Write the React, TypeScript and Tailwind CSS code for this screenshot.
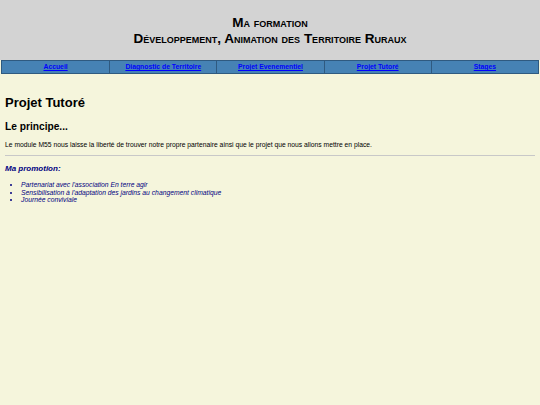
import React from "react";

const links = ["Accueil", "Diagnostic de Territoire", "Projet Evenementiel", "Projet Tutoré", "Stages"];

export default function App() {
  return (
    <div className="min-h-[405px] bg-[#f5f5dc] text-black" style={{ fontFamily: '"Liberation Sans", Arial, sans-serif' }}>
      <div className="bg-[#d3d3d3] pt-[15px] pb-[13px] text-center">
        <div className="text-[13.5px] leading-[16px] font-bold [font-variant:small-caps]">Ma formation</div>
        <div className="text-[13.5px] leading-[16px] font-bold [font-variant:small-caps]">Développement, Animation des Territoire Ruraux</div>
      </div>
      <div className="px-[1px]">
        <div className="grid grid-cols-5 border border-[#2f5a80] bg-[#4682b4]">
          {links.map((l, i) => (
            <div key={l} className={"h-[12px] flex items-center justify-center " + (i > 0 ? "border-l border-[#2f5a80]" : "")}>
              <a href="#" className="text-[6.8px] leading-[8px] font-bold text-[#0000ff] underline">{l}</a>
            </div>
          ))}
        </div>
      </div>
      <div className="px-[5px]">
        <h1 className="mt-[21px] text-[13px] leading-[16px] font-bold">Projet Tutoré</h1>
        <h2 className="mt-[9px] text-[10.2px] leading-[13px] font-bold">Le principe...</h2>
        <p className="mt-[7px] text-[6.75px] leading-[9px]">Le module M55 nous laisse la liberté de trouver notre propre partenaire ainsi que le projet que nous allons mettre en place.</p>
        <hr className="mt-[6px] border-t border-[#c8c8c8]" />
        <h3 className="mt-[8px] text-[8px] leading-[10px] font-bold italic text-[#000080]">Ma promotion:</h3>
        <ul className="mt-[7px] pl-[16px] list-disc text-[6.75px] leading-[7.5px] italic text-[#000080]">
          <li>Partenariat avec l'association En terre agir</li>
          <li>Sensibilisation à l'adaptation des jardins au changement climatique</li>
          <li>Journée conviviale</li>
        </ul>
      </div>
    </div>
  );
}
